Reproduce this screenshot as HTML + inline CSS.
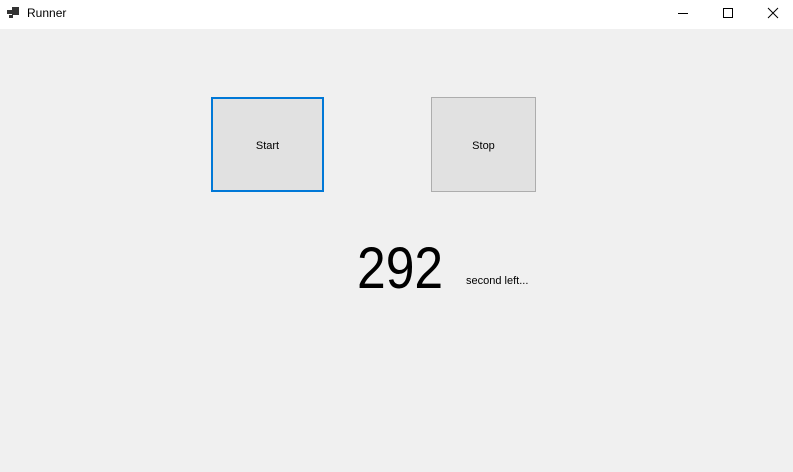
<!DOCTYPE html>
<html><head><style>
body{margin:0;width:793px;height:472px;background:#f0f0f0;font-family:"Liberation Sans",sans-serif;position:relative;overflow:hidden}
.tb{position:absolute;left:0;top:0;width:793px;height:29px;background:#fff}
.t{position:absolute;left:27px;top:6px;font-size:12px;color:#000}
.btn{position:absolute;background:#e1e1e1;box-sizing:border-box;font-size:11px;display:flex;align-items:center;justify-content:center;color:#000;padding-top:2px}
.ab{position:absolute}
</style></head><body>
<div class="tb">
<svg class="ab" style="left:7px;top:7px" width="12" height="12"><rect x="5" y="0" width="7" height="8" fill="#333"/><rect x="0" y="3" width="5" height="4" fill="#333"/><rect x="2" y="8" width="4" height="3" fill="#333"/></svg>
<div class="t">Runner</div>
<svg class="ab" style="left:677px;top:6px" width="12" height="14"><line x1="1" y1="7.5" x2="11" y2="7.5" stroke="#000"/></svg>
<svg class="ab" style="left:722px;top:6px" width="12" height="14"><rect x="1.5" y="2.5" width="9" height="9" fill="none" stroke="#000"/></svg>
<svg class="ab" style="left:767px;top:6px" width="12" height="14"><path d="M1 2L11 12M11 2L1 12" stroke="#000"/></svg>
</div>
<div class="btn" style="left:211px;top:97px;width:113px;height:95px;border:2px solid #0078d7">Start</div>
<div class="btn" style="left:431px;top:97px;width:105px;height:95px;border:1px solid #adadad">Stop</div>
<div class="ab" style="left:357px;top:237px;font-size:58px;line-height:64px;transform:scaleX(0.89);transform-origin:left">292</div>
<div class="ab" style="left:466px;top:275px;font-size:11px">second left...</div>
</body></html>
